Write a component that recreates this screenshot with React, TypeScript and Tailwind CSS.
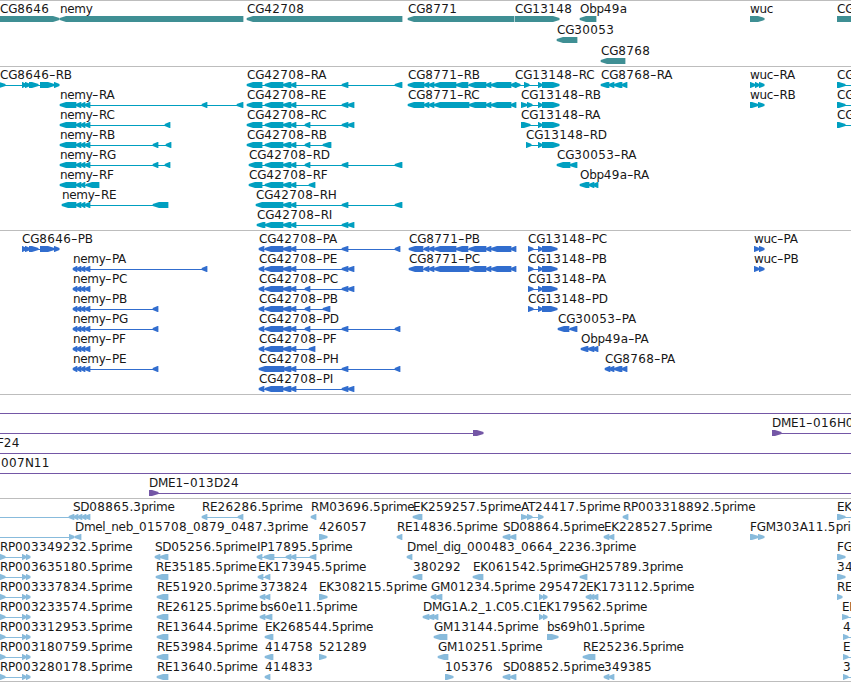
import React from 'react';
import { clsx } from 'clsx';

type Strand = '<' | '>' | '-';
type Block = [number, number];

interface Feature {
  label: string;
  // left edge of the label, in canvas units
  x: number;
  strand: Strand;
  blocks: Block[];
  // connector range when it runs past the first / last block
  line?: Block;
}

interface Track {
  id: string;
  height: string;
  rowHeight: string;
  color: string;
  rows: Feature[][];
}

const f = (label: string, x: number, strand: Strand, blocks: Block[], line?: Block): Feature => ({
  label,
  x,
  strand,
  blocks,
  line,
});

// Shared exon groups
const nemyMid: Block[] = [[76, 81], [81, 85], [85, 90]];
const nemyR: Block[] = [[60, 76], ...nemyMid];
const nemyP: Block[] = [[73, 77], [77, 81], [81, 85], [85, 90]];
const cg42Tail: Block[] = [[283, 291], [291, 296]];
const cg42Mid: Block[] = [[265, 283], ...cg42Tail];
const cg42R: Block[] = [[247, 262], ...cg42Mid];
const cg42S: Block[] = [[249, 262], ...cg42Mid];
const cg42P: Block[] = [[259, 264], ...cg42Mid];
const near: Block[] = [[342, 348], [348, 354]];
const far: Block[] = [[342, 348], [395, 402]];
const farP: Block[] = [[342, 348], [395, 400]];
const cg8771End: Block[] = [[469, 486], [486, 491], [491, 511], [511, 516]];
const cg8771B: Block[] = [[424, 429], [429, 434], [434, 456], [456, 468], ...cg8771End];
const cg8771C: Block[] = [[424, 429], [429, 434], [434, 469], ...cg8771End];
const cg13R: Block[] = [[538, 542], [542, 559]];
const cg13P: Block[] = [[528, 533], [538, 542], [542, 557]];
const rpRead: Block[] = [[0, 5], [22, 26], [26, 30]];

const edge = (label: string, x = 837, w = 8) => f(label, x, '>', [[x, x + w]], [x, 860]);

const genes: Feature[][] = [
  [
    f('CG8646', 0, '>', [[-10, 59]]),
    f('nemy', 60, '<', [[60, 243]]),
    f('CG42708', 247, '<', [[247, 402]]),
    f('CG8771', 408, '<', [[408, 514]]),
    f('CG13148', 515, '>', [[515, 559]]),
    f('Obp49a', 580, '<', [[580, 596]]),
    f('wuc', 750, '>', [[750, 764]]),
    f('CG', 837, '>', [[837, 870]]),
  ],
  [f('CG30053', 557, '<', [[557, 577]])],
  [f('CG8768', 601, '<', [[601, 625]])],
];

const transcripts: Feature[][] = [
  [
    f('CG8646-RB', 0, '>', [[-3, 5], [22, 26], [25, 30], [29, 38], [40, 54], [54, 59]]),
    f('CG42708-RA', 247, '<', [...cg42R, ...far]),
    f('CG8771-RB', 408, '<', [[408, 424], ...cg8771B]),
    f('CG13148-RC', 515, '>', [[515, 520], [524, 529], ...cg13R]),
    f('CG8768-RA', 601, '<', [[601, 609], [609, 614], [614, 622], [622, 627]]),
    f('wuc-RA', 750, '>', [[750, 755], [755, 759], [759, 764]]),
    edge('CG'),
  ],
  [
    f('nemy-RA', 60, '<', [...nemyR, [202, 207], [237, 243]]),
    f('CG42708-RE', 247, '<', [...cg42R, ...near]),
    f('CG8771-RC', 408, '<', [[408, 424], ...cg8771C]),
    f('CG13148-RB', 521, '>', [[521, 527], [527, 532], ...cg13R]),
    f('wuc-RB', 750, '>', [[750, 758], [758, 764]]),
    edge('CG'),
  ],
  [
    f('nemy-RC', 60, '<', [...nemyR, [165, 170]]),
    f('CG42708-RC', 247, '<', [...cg42R, [305, 310], ...near]),
    f('CG13148-RA', 521, '>', [[521, 530], ...cg13R]),
    edge('CG'),
  ],
  [
    f('nemy-RB', 60, '<', [...nemyR, [153, 158], [166, 171]]),
    f('CG42708-RB', 247, '<', [...cg42R, [305, 310], [323, 331]]),
    f('CG13148-RD', 526, '>', [[526, 531], ...cg13R]),
  ],
  [
    f('nemy-RG', 60, '<', [...nemyR, [153, 158], [165, 170]]),
    f('CG42708-RD', 249, '<', [...cg42S, [305, 310], ...far]),
    f('CG30053-RA', 557, '<', [[557, 570], [570, 577]]),
  ],
  [
    f('nemy-RF', 60, '<', [[60, 76], [76, 81], [81, 85], [86, 99]]),
    f('CG42708-RF', 249, '<', [...cg42S, [309, 315]]),
    f('Obp49a-RA', 580, '<', [[580, 589], [589, 594], [593, 598]]),
  ],
  [
    f('nemy-RE', 62, '<', [[62, 76], ...nemyMid, [153, 168]]),
    f('CG42708-RH', 256, '<', [[256, 283], ...cg42Tail, ...far]),
  ],
  [f('CG42708-RI', 257, '<', [[257, 265], ...cg42Mid, ...near])],
];

const proteins: Feature[][] = [
  [
    f('CG8646-PB', 22, '>', [[22, 26], [25, 30], [29, 38], [40, 54], [54, 59]]),
    f('CG42708-PA', 259, '<', [...cg42P, ...farP]),
    f('CG8771-PB', 409, '<', [[409, 423], ...cg8771B]),
    f('CG13148-PC', 528, '>', cg13P),
    f('wuc-PA', 754, '>', [[754, 759], [759, 764]]),
  ],
  [
    f('nemy-PA', 73, '<', [...nemyP, [202, 207]]),
    f('CG42708-PE', 259, '<', [...cg42P, ...near]),
    f('CG8771-PC', 409, '<', [[409, 423], ...cg8771C]),
    f('CG13148-PB', 528, '>', cg13P),
    f('wuc-PB', 754, '>', [[754, 759], [759, 764]]),
  ],
  [
    f('nemy-PC', 73, '<', nemyP),
    f('CG42708-PC', 259, '<', [...cg42P, [305, 310], ...near]),
    f('CG13148-PA', 528, '>', cg13P),
  ],
  [
    f('nemy-PB', 73, '<', [...nemyP, [153, 158]]),
    f('CG42708-PB', 259, '<', [...cg42P, [305, 310], [323, 330]]),
    f('CG13148-PD', 528, '>', cg13P),
  ],
  [
    f('nemy-PG', 73, '<', [...nemyP, [153, 158]]),
    f('CG42708-PD', 259, '<', [...cg42P, [305, 310], ...farP]),
    f('CG30053-PA', 558, '<', [[558, 569], [570, 577]]),
  ],
  [
    f('nemy-PF', 73, '<', nemyP),
    f('CG42708-PF', 259, '<', [...cg42P, [309, 315]]),
    f('Obp49a-PA', 581, '<', [[581, 588], [588, 594], [593, 598]]),
  ],
  [
    f('nemy-PE', 73, '<', [...nemyP, [153, 158]]),
    f('CG42708-PH', 259, '<', [[259, 284], ...cg42Tail, ...farP]),
    f('CG8768-PA', 605, '<', [[605, 610], [609, 614], [614, 622], [622, 627]]),
  ],
  [f('CG42708-PI', 259, '<', [...cg42P, ...near])],
];

const clones: Feature[][] = [
  [f('', 0, '-', [], [-2, 853])],
  [
    f('', 0, '>', [[473, 483]], [-2, 480]),
    f('DME1-016H0', 772, '>', [[772, 781]], [772, 853]),
  ],
  [f('F24', -3, '-', [], [-2, 853])],
  [f('007N11', 1, '-', [], [-2, 853])],
  [f('DME1-013D24', 149, '>', [[149, 158]], [149, 853])],
];

const ests: Feature[][] = [
  [
    f('SD08865.3prime', 73, '<', [[69, 74], [74, 78], [78, 82], [82, 86], [85, 90]], [-2, 90]),
    f('RE26286.5prime', 202, '<', [[202, 207], [238, 243]]),
    f('RM03696.5prime', 311, '<', [[311, 316]]),
    f('EK259257.5prime', 413, '<', [[413, 422]]),
    f('AT24417.5prime', 521, '>', [[521, 527], [527, 532], [538, 543]]),
    f('RP003318892.5prime', 623, '<', [[623, 628]]),
    edge('EK'),
  ],
  [
    f('', 0, '>', [[69, 74]], [-2, 74]),
    f('Dmel_neb_015708_0879_0487.3prime', 75, '<', [[75, 81]]),
    f('426057', 319, '>', [[319, 327]]),
    f('RE14836.5prime', 397, '<', [[397, 402]]),
    f('SD08864.5prime', 503, '<', [[503, 510], [510, 516]]),
    f('EK228527.5prime', 604, '<', [[604, 609], [609, 614]]),
    f('FGM303A11.5prime', 750, '>', [[750, 758], [758, 764]]),
  ],
  [
    f('RP003349232.5prime', 0, '>', rpRead),
    f('SD05256.5prime', 155, '<', [[155, 160], [160, 168]]),
    f('IP17895.5prime', 257, '<', [[257, 262], [264, 274], [286, 291], [291, 296], [310, 316]]),
    f('Dmel_dig_000483_0664_2236.3prime', 407, '<', [[407, 412]]),
    f('FG', 837, '>', [[837, 845]]),
  ],
  [
    f('RP003635180.5prime', 0, '>', rpRead),
    f('RE35185.5prime', 156, '<', [[156, 168]]),
    f('EK173945.5prime', 258, '<', [[258, 263], [265, 270]]),
    f('380292', 413, '<', [[413, 422]]),
    f('EK061542.5prime', 473, '<', [[473, 483]]),
    f('GH25789.3prime', 580, '<', [[580, 587]]),
    f('34', 837, '>', [[837, 845]]),
  ],
  [
    f('RP003337834.5prime', 0, '>', rpRead),
    f('RE51920.5prime', 157, '<', [[157, 168]]),
    f('373824', 260, '<', [[260, 265], [265, 270]]),
    f('EK308215.5prime', 319, '>', [[319, 327]]),
    f('GM01234.5prime', 431, '<', [[431, 436], [435, 442]]),
    f('295472', 539, '>', [[539, 543], [543, 547]]),
    f('EK173112.5prime', 586, '<', [[586, 591], [590, 594], [593, 598]]),
    f('RE', 837, '>', [[837, 842]]),
  ],
  [
    f('RP003233574.5prime', 0, '>', rpRead),
    f('RE26125.5prime', 157, '<', [[157, 168]]),
    f('bs60e11.5prime', 260, '<', [[260, 265], [265, 272]]),
    f('DMG1A.2_1.C05.C1', 423, '<', [[423, 429], [428, 434], [433, 438]]),
    f('EK179562.5prime', 539, '>', [[539, 543], [543, 547]]),
    edge('EK', 842, 6),
  ],
  [
    f('RP003312953.5prime', 0, '>', rpRead),
    f('RE13644.5prime', 157, '<', [[157, 168]]),
    f('EK268544.5prime', 265, '<', [[265, 273]]),
    f('GM13144.5prime', 434, '<', [[434, 447]]),
    f('bs69h01.5prime', 547, '>', [[547, 558]]),
    edge('4', 843, 5),
  ],
  [
    f('RP003180759.5prime', 0, '>', rpRead),
    f('RE53984.5prime', 157, '<', [[157, 168]]),
    f('414758', 265, '<', [[265, 273]]),
    f('521289', 319, '>', [[319, 326]]),
    f('GM10251.5prime', 438, '<', [[438, 448]]),
    f('RE25236.5prime', 583, '<', [[583, 595]]),
    edge('E', 843, 5),
  ],
  [
    f('RP003280178.5prime', 0, '>', rpRead),
    f('RE13640.5prime', 157, '<', [[157, 168]]),
    f('414833', 265, '<', [[265, 270]]),
    f('105376', 445, '>', [[445, 453]]),
    f('SD08852.5prime', 503, '<', [[503, 510], [510, 516]]),
    f('349385', 604, '<', [[604, 609], [609, 614]]),
    edge('3', 843, 5),
  ],
];

const tracks: Track[] = [
  { id: 'genes', height: 'h-[66px]', rowHeight: 'h-[21px]', color: 'text-[#3f8f94]', rows: genes },
  { id: 'transcripts', height: 'h-[164px]', rowHeight: 'h-5', color: 'text-[#009fc0]', rows: transcripts },
  { id: 'proteins', height: 'h-[164px]', rowHeight: 'h-5', color: 'text-[#316dce]', rows: proteins },
  { id: 'clones', height: 'h-[104px]', rowHeight: 'h-5', color: 'text-[#7457a6]', rows: clones },
  { id: 'ests', height: 'h-[184px]', rowHeight: 'h-5', color: 'text-[#88bbdc]', rows: ests },
];

function blockPoints([x1, x2]: Block, strand: Strand) {
  const head = Math.min(6, x2 - x1 - 0.5);
  if (strand === '<') {
    const n = x1 + head;
    const r = x2 + 0.4;
    return `${x1 - 0.3},2 ${n},0 ${r},0 ${r},6 ${n},6 ${x1 - 0.3},4`;
  }
  const n = x2 - head;
  return `${x1},0 ${n},0 ${x2 + 0.5},2 ${x2 + 0.5},4 ${n},6 ${x1},6`;
}

function Glyph({ feature }: { feature: Feature }) {
  const { strand, blocks, line } = feature;
  const [x1, x2] = line ?? [blocks[0][0], blocks[blocks.length - 1][1]];
  const showLine = line || blocks.length > 1;

  return (
    <g fill="currentColor">
      {showLine && <rect x={x1 + 1} y={3} width={x2 - x1 - 2} height={1} />}
      {blocks.map((b, i) => (
        <polygon key={i} points={blockPoints(b, strand)} />
      ))}
    </g>
  );
}

// Digits, capitals and lower case each get their own tracking
function Label({ text }: { text: string }) {
  const runs = text.match(/[0-9]+|[a-z]+|-|[A-Z._]+/g) ?? [];
  return (
    <>
      {runs.map((run, i) => (
        <span
          key={i}
          className={clsx(
            /[0-9]/.test(run) && 'tracking-[0.37px]',
            /[a-z]/.test(run) && 'tracking-[-0.35px]',
            /[A-Z]/.test(run) && 'tracking-[-0.25px]',
            run === '-' && 'inline-block w-[6.5px] scale-x-150 text-center'
          )}
        >
          {run}
        </span>
      ))}
    </>
  );
}

function Row({ features, height }: { features: Feature[]; height: string }) {
  return (
    <div className={clsx('relative', height)}>
      <svg className="absolute left-0 top-[15px] overflow-visible" width={851} height={6}>
        {features.map((feature, i) => (
          <Glyph key={i} feature={feature} />
        ))}
      </svg>
      {features.filter(ft => ft.label).map((ft, i) => (
        <span
          key={i}
          className="absolute top-0 whitespace-nowrap text-xs leading-4 text-neutral-900"
          style={{ left: ft.x }}
        >
          <Label text={ft.label} />
        </span>
      ))}
    </div>
  );
}

export default function App() {
  return (
    <div className="flex h-[682px] w-[851px] flex-col overflow-hidden bg-white font-['DejaVu_Sans',sans-serif]">
      {tracks.map(track => (
        <section
          key={track.id}
          className={clsx('shrink-0 border-t border-[#bdbdbd] last:border-b', track.height, track.color)}
        >
          {track.rows.map((row, i) => (
            <Row key={i} features={row} height={track.rowHeight} />
          ))}
        </section>
      ))}
    </div>
  );
}
